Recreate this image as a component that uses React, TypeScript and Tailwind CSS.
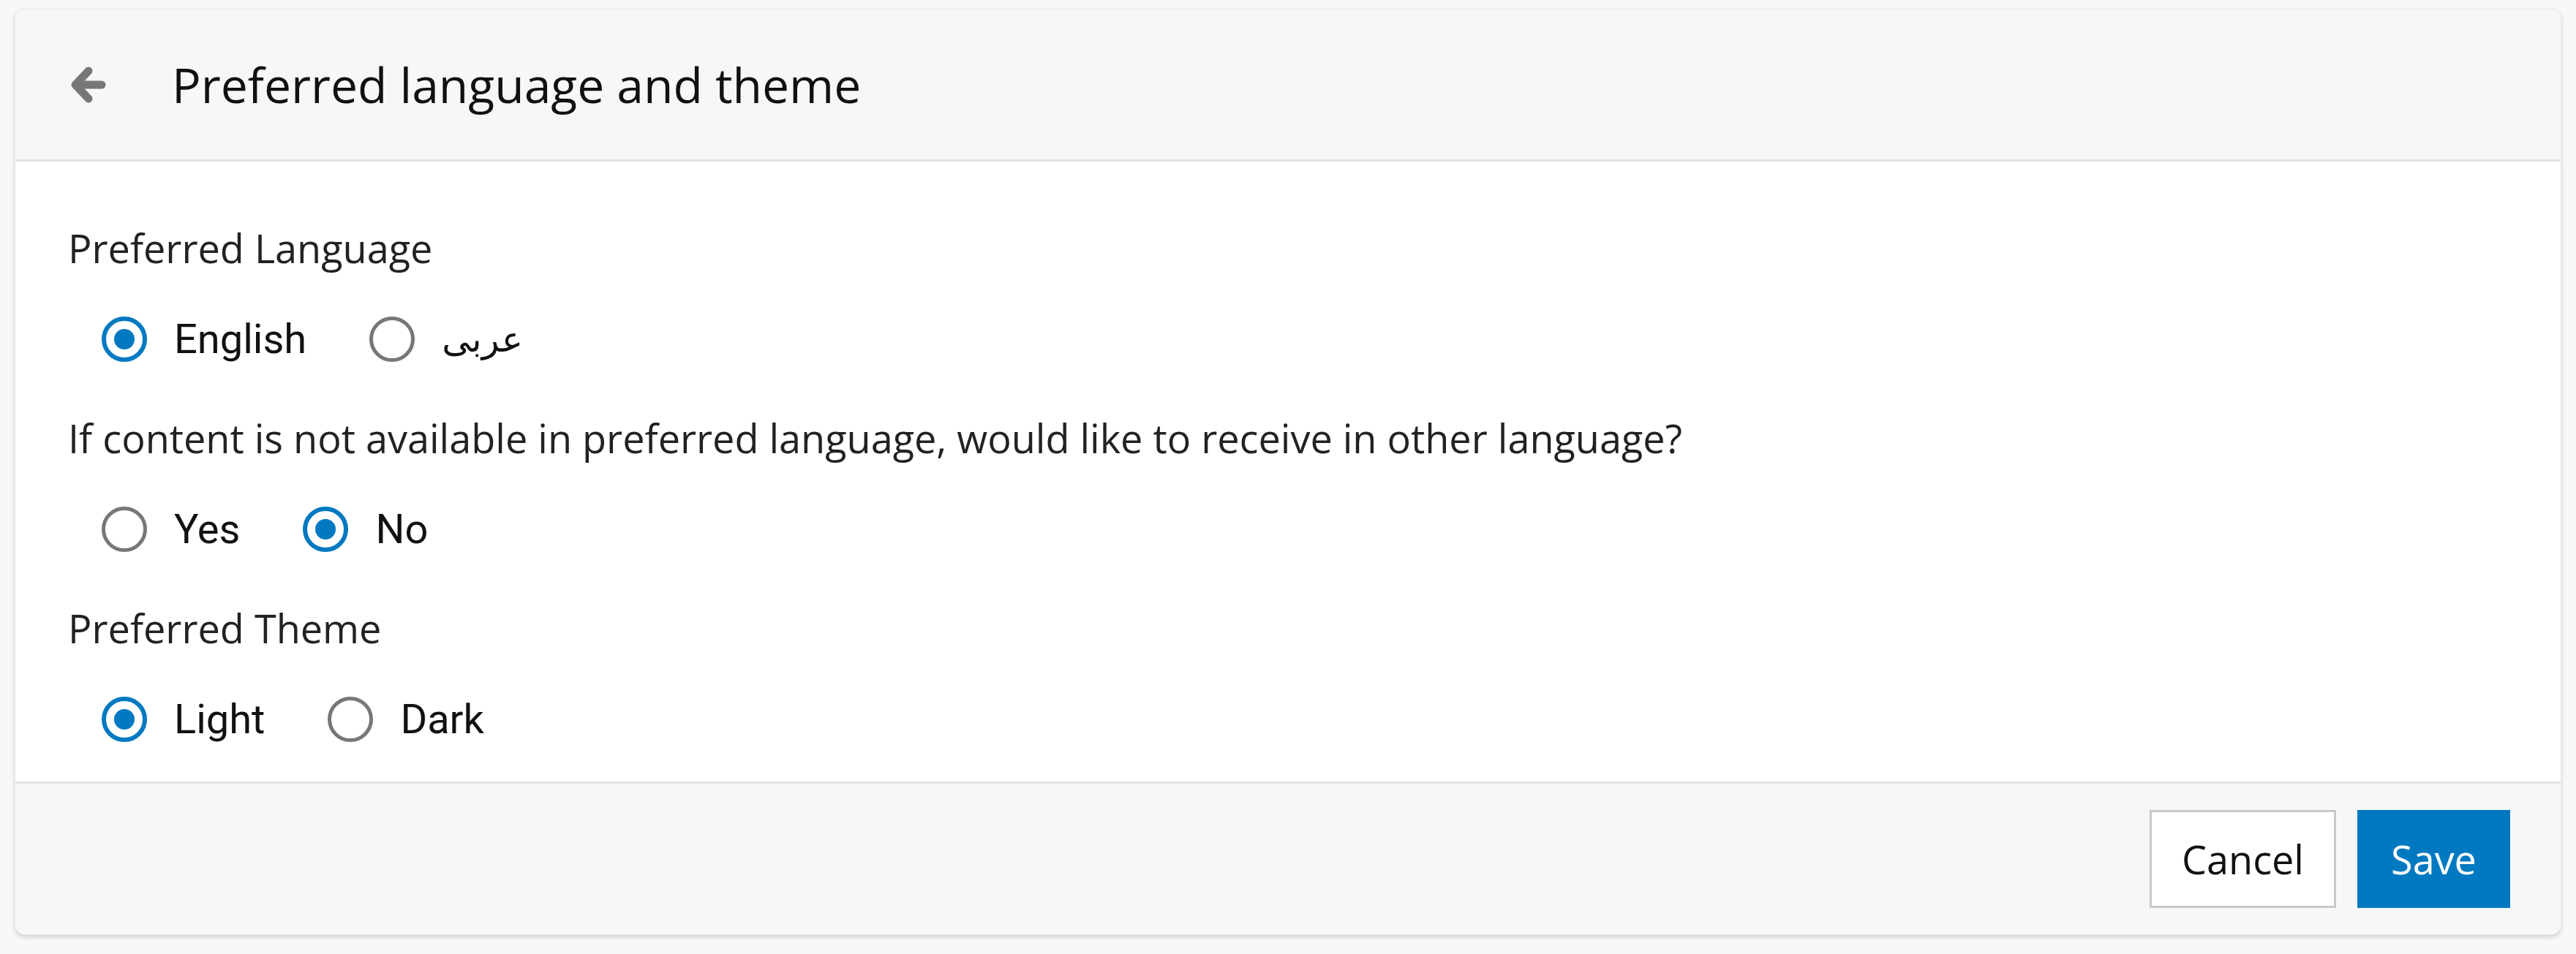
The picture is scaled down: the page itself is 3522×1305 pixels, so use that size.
type Option = { label: string; checked?: boolean; rtl?: boolean };

const heading = "font-['Open_Sans',sans-serif] text-[54px] leading-[76px] text-[#222]";

function BackArrow() {
  return (
    <svg width="50" height="52" viewBox="0 0 50 52" className="text-[#777]">
      <path
        d="M44 26H9M26 7L8 26L26 45"
        fill="none"
        stroke="currentColor"
        strokeWidth="11"
        strokeLinecap="round"
        strokeLinejoin="round"
      />
    </svg>
  );
}

function Radio({ checked }: { checked?: boolean }) {
  return checked ? (
    <span className="w-[62px] h-[62px] rounded-full border-[6px] border-[#0079c1] flex items-center justify-center shrink-0">
      <span className="w-[28px] h-[28px] rounded-full bg-[#0079c1]" />
    </span>
  ) : (
    <span className="w-[62px] h-[62px] rounded-full border-[5px] border-[#777] shrink-0" />
  );
}

function RadioRow({ options }: { options: Option[] }) {
  return (
    <div className="mt-[52px] ml-[46px] h-[70px] flex items-center gap-[86px]">
      {options.map(o => (
        <label key={o.label} className="flex items-center gap-[37px]">
          <Radio checked={o.checked} />
          {o.rtl ? (
            <span dir="rtl" className="font-['DejaVu_Sans',sans-serif] text-[49px] leading-none text-[#111]">
              {o.label}
            </span>
          ) : (
            <span className="font-['Roboto',sans-serif] text-[56px] leading-none text-[#111]">
              {o.label}
            </span>
          )}
        </label>
      ))}
    </div>
  );
}

export default function App() {
  return (
    <div className="min-h-screen w-full bg-[#f8f8f8] pt-[12px] px-[20px]">
      <div className="bg-white rounded-[14px] overflow-hidden shadow-[0_3px_6px_rgba(0,0,0,0.16)] border border-[#e8e8e8]">
        <div className="h-[208px] bg-[#f7f7f7] border-b-[3px] border-[#e2e2e2] flex items-center pl-[74px]">
          <BackArrow />
          <h1 className="ml-[90px] font-['Open_Sans',sans-serif] text-[66px] text-[#111]">
            Preferred language and theme
          </h1>
        </div>

        <div className="pl-[72px] pt-[80px] pb-[50px] flex flex-col">
          <div className={heading}>Preferred Language</div>
          <RadioRow options={[{ label: 'English', checked: true }, { label: 'عربى', rtl: true }]} />

          <div className={`${heading} mt-[62px]`}>
            If content is not available in preferred language, would like to receive in other language?
          </div>
          <RadioRow options={[{ label: 'Yes' }, { label: 'No', checked: true }]} />

          <div className={`${heading} mt-[62px]`}>Preferred Theme</div>
          <RadioRow options={[{ label: 'Light', checked: true }, { label: 'Dark' }]} />
        </div>

        <div className="h-[209px] bg-[#f7f7f7] border-t-[3px] border-[#e2e2e2] flex items-center justify-end gap-[29px] pr-[69px]">
          <button className="h-[134px] w-[255px] bg-white border-[3px] border-[#c8c8c8] font-['Open_Sans',sans-serif] text-[54px] text-[#111]">
            Cancel
          </button>
          <button className="h-[134px] w-[209px] bg-[#0079c1] font-['Open_Sans',sans-serif] text-[54px] text-white">
            Save
          </button>
        </div>
      </div>
    </div>
  );
}
